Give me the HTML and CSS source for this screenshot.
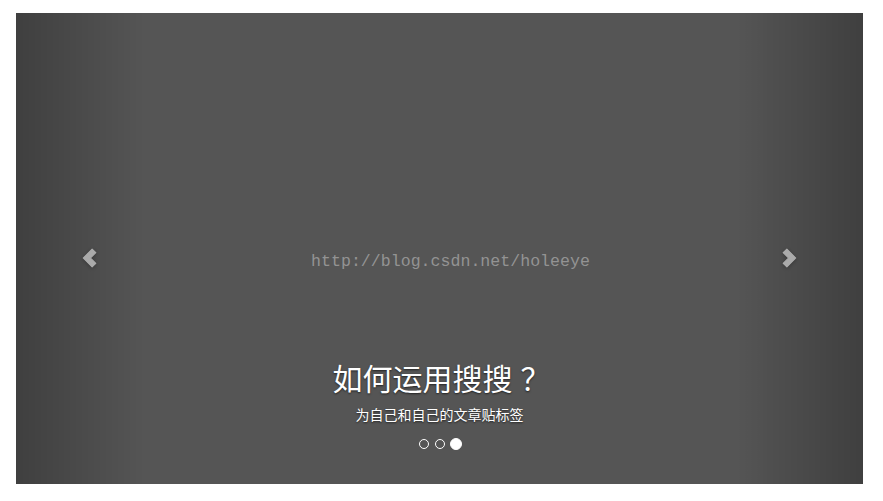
FILE: index.html
```html
<!DOCTYPE html>
<html lang="zh-CN">
<head>
<meta charset="utf-8">
<title>Carousel</title>
<link rel="stylesheet" href="styles.css">
</head>
<body>
<div class="carousel">
  <div class="slide">
    <span class="watermark">http://blog.csdn.net/holeeye</span>
  </div>
  <a class="control left" href="#">
    <svg class="chev" width="15" height="20" viewBox="0 0 13 19"><polygon points="0.5,9.5 9,1 12.5,4.5 7.5,9.5 12.5,14.5 9,18" /></svg>
  </a>
  <a class="control right" href="#">
    <svg class="chev" width="15" height="20" viewBox="0 0 13 19"><polygon points="12.5,9.5 4,1 0.5,4.5 5.5,9.5 0.5,14.5 4,18" /></svg>
  </a>
  <div class="caption">
    <h3 class="title">如何运用搜搜<span class="q">？</span></h3>
    <p class="sub">为自己和自己的文章贴标签</p>
  </div>
  <ol class="indicators">
    <li class="dot"></li>
    <li class="dot"></li>
    <li class="dot active"></li>
  </ol>
</div>
</body>
</html>
```
FILE: styles.css
```css
html, body {
  margin: 0;
  padding: 0;
  background: #fff;
}
body {
  padding: 13px 20px 17px 16px;
  font-family: "Noto Sans CJK SC", "Noto Sans", sans-serif;
}
.carousel {
  position: relative;
  width: 847px;
  height: 471px;
  background: #555;
  overflow: hidden;
}
.slide {
  height: 100%;
  display: flex;
  align-items: center;
  justify-content: center;
}
.watermark {
  font-family: "Liberation Mono", monospace;
  font-size: 16.6px;
  color: #939393;
  margin-top: 25px;
  margin-left: 22px;
}
.control {
  position: absolute;
  top: 0;
  bottom: 0;
  width: 127px;
  opacity: 0.5;
  display: flex;
  align-items: center;
  text-decoration: none;
  box-sizing: border-box;
}
.control.left {
  left: 0;
  background: linear-gradient(to right, rgba(0,0,0,.5) 0, rgba(0,0,0,.0001) 100%);
  justify-content: flex-start;
  padding-left: 66px;
}
.control.right {
  right: 0;
  background: linear-gradient(to right, rgba(0,0,0,.0001) 0, rgba(0,0,0,.5) 100%);
  justify-content: flex-end;
  padding-right: 66px;
}
.chev {
  fill: #fff;
  stroke: #fff;
  stroke-width: 1;
  stroke-linejoin: round;
  margin-top: 18px;
  filter: drop-shadow(0 1px 2px rgba(0,0,0,.6));
}
.caption {
  position: absolute;
  left: 20%;
  right: 20%;
  bottom: 60px;
  text-align: center;
  color: #fff;
  text-shadow: 0 1px 2px rgba(0,0,0,.6);
}
.title {
  margin: 0;
  padding-left: 4px;
  font-size: 30px;
  font-weight: 400;
  line-height: 1.1;
}
.q {
  margin-left: 8px;
}
.sub {
  margin: 10px 0 0;
  font-size: 14px;
  line-height: 20px;
}
.indicators {
  position: absolute;
  left: 0;
  right: 0;
  bottom: 34px;
  margin: 0;
  padding: 0;
  list-style: none;
  display: flex;
  justify-content: center;
  align-items: center;
  gap: 4px;
}
.dot {
  width: 10px;
  height: 10px;
  box-sizing: border-box;
  border: 1px solid #fff;
  border-radius: 50%;
  margin: 1px;
}
.dot.active {
  width: 12px;
  height: 12px;
  margin: 0;
  background: #fff;
}
```
